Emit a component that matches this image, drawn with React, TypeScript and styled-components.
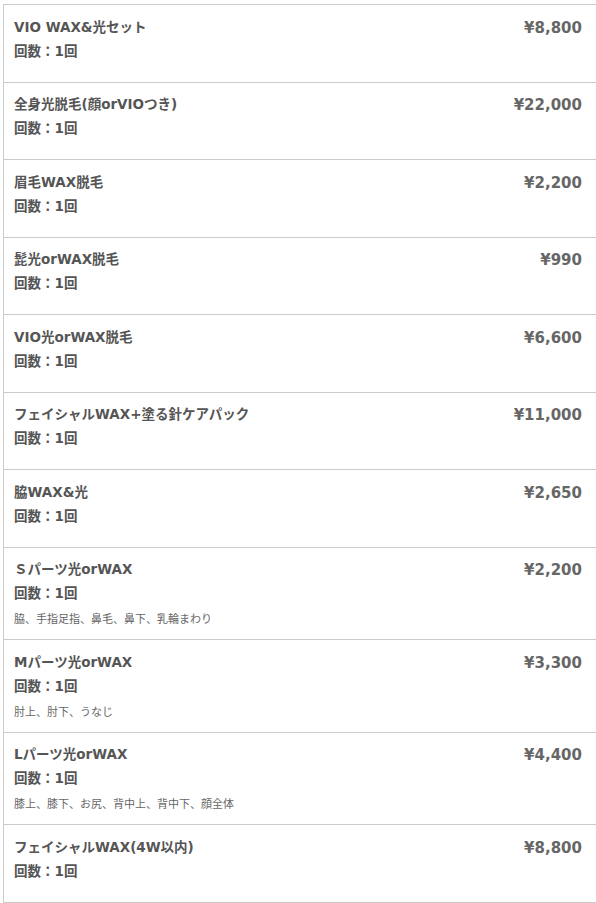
import React from 'react'
import styled, { createGlobalStyle } from 'styled-components'

type Item = {
  name: string
  price: string
  note?: string
}

const items: Item[] = [
  { name: 'VIO WAX&光セット', price: '¥8,800' },
  { name: '全身光脱毛(顔orVIOつき)', price: '¥22,000' },
  { name: '眉毛WAX脱毛', price: '¥2,200' },
  { name: '髭光orWAX脱毛', price: '¥990' },
  { name: 'VIO光orWAX脱毛', price: '¥6,600' },
  { name: 'フェイシャルWAX+塗る針ケアパック', price: '¥11,000' },
  { name: '脇WAX&光', price: '¥2,650' },
  { name: 'Ｓパーツ光orWAX', price: '¥2,200', note: '脇、手指足指、鼻毛、鼻下、乳輪まわり' },
  { name: 'Mパーツ光orWAX', price: '¥3,300', note: '肘上、肘下、うなじ' },
  { name: 'Lパーツ光orWAX', price: '¥4,400', note: '膝上、膝下、お尻、背中上、背中下、顔全体' },
  { name: 'フェイシャルWAX(4W以内)', price: '¥8,800' },
]

const GlobalStyle = createGlobalStyle`
  html, body {
    margin: 0;
    padding: 0;
    background: #fff;
  }
  body {
    font-family: "DejaVu Sans", "Noto Sans CJK JP", sans-serif;
    color: #555;
  }
`

function App(): JSX.Element {
  return (
    <S.Page>
      <GlobalStyle />
      <S.List>
        {items.map(item => (
          <S.Row key={item.name}>
            <S.Info>
              <S.Name>{item.name}</S.Name>
              <S.Count>回数：1回</S.Count>
              {item.note && <S.Note>{item.note}</S.Note>}
            </S.Info>
            <S.Price>{item.price}</S.Price>
          </S.Row>
        ))}
      </S.List>
    </S.Page>
  )
}

const S = {
  Page: styled.div`
    padding: 4px 0 0 3px;
  `,
  List: styled.ul`
    margin: 0;
    padding: 0;
    list-style: none;
    border-top: 1px solid #ccc;
    border-left: 1px solid #ccc;
  `,
  Row: styled.li`
    display: flex;
    justify-content: space-between;
    align-items: flex-start;
    padding: 9.5px 14px 10px 10px;
    min-height: 57px;
    border-bottom: 1px solid #ccc;
  `,
  Info: styled.div`
    display: flex;
    flex-direction: column;
  `,
  Name: styled.div`
    font-size: 13.5px;
    font-weight: bold;
    line-height: 24px;
    color: #555;
  `,
  Count: styled.div`
    font-size: 13.5px;
    font-weight: bold;
    line-height: 24px;
    color: #555;
  `,
  Note: styled.div`
    margin-top: 6px;
    font-size: 11px;
    line-height: 18px;
    color: #666;
  `,
  Price: styled.div`
    font-size: 15px;
    font-weight: bold;
    line-height: 26px;
    color: #666;
  `,
}

export default App
